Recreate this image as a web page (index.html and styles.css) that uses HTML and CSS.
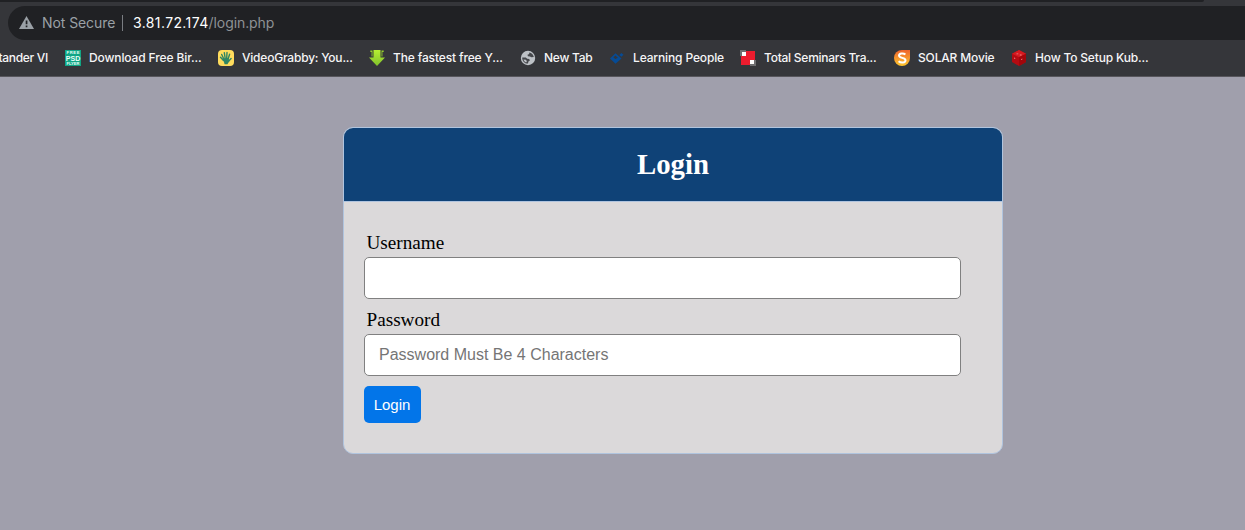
FILE: index.html
```html
<!DOCTYPE html>
<html lang="en">
<head>
<meta charset="utf-8">
<title>Login</title>
<link rel="stylesheet" href="styles.css">
</head>
<body>
<header class="browser">
  <div class="tabstrip"></div>
  <div class="address">
    <svg class="warning" width="15" height="13" viewBox="0 0 15 13"><path d="M7.5 0 15 13H0z" fill="#9aa0a6"/><path d="M6.7 4.6h1.7v3.6H6.7zM6.7 9.5h1.7v1.7H6.7z" fill="#202124"/></svg>
    <span class="insecure">Not Secure</span>
    <span class="divider"></span>
    <span class="url"><span class="host">3.81.72.174</span><span class="path">/login.php</span></span>
  </div>
  <nav class="bookmarks">
    <div class="bookmark clipped"><span>tander VI</span></div>
    <div class="bookmark">
      <svg width="16" height="16" viewBox="0 0 16 16"><rect width="16" height="16" fill="#10a585"/><g fill="#e8fff8" font-family="Liberation Sans, sans-serif" font-weight="bold" text-anchor="middle"><text x="8" y="4.2" font-size="4.2" textLength="13">FREE</text><text x="8" y="10.9" font-size="7.5" textLength="14.5" lengthAdjust="spacingAndGlyphs">PSD</text><text x="8" y="15.4" font-size="4.2" textLength="13" lengthAdjust="spacingAndGlyphs">FLYER</text></g></svg>
      <span class="download">Download Free Bir...</span>
    </div>
    <div class="bookmark">
      <svg width="16" height="16" viewBox="0 0 16 16"><rect width="16" height="16" rx="4" fill="#ffdc5d"/><g fill="none" stroke="#2f8564" stroke-width="1.4" stroke-linecap="round"><path d="M5.8 9 3.7 4.5M7.2 8.5 6.3 2.7M8.7 8.5 9 2.5M10.1 9l1.5-4.8M10.3 11.4 13.1 8.6M5.5 10.5 2.5 7.2"/></g><path d="M5 8.5 10.6 8l.5 3.3-1.6 3H6.6z" fill="#2f8564"/></svg>
      <span class="grabby">VideoGrabby: You...</span>
    </div>
    <div class="bookmark">
      <svg width="16" height="16" viewBox="0 0 16 16"><defs><linearGradient id="lime" x1="0" y1="0" x2="0" y2="1"><stop offset="0" stop-color="#b7ef32"/><stop offset="1" stop-color="#7fc02c"/></linearGradient></defs><path d="M4.5 0h7v7.5H16L8 16 0 7.5h4.5z" fill="url(#lime)"/><path d="M1.3.5H3.5V6.5H2.6V2H1.3zM14.7.5h-2.2v6h.9V2h1.3z" fill="#94ce2d"/></svg>
      <span class="fastest">The fastest free Y...</span>
    </div>
    <div class="bookmark">
      <svg width="16" height="16" viewBox="0 0 16 16"><circle cx="8" cy="8" r="7.2" fill="#bdc1c6"/><path d="M9.2 2.4c2.4.4 4.3 2.2 4.6 4.6l-2.3.3-1.6-.9-2-.1-.4-1.5 1.7-.9zM2.2 7.4h3.6l1.4 1.3 2 .2.7 1.5-1.5 1.2-.4 2c-3.4.2-5.9-2.8-5.8-6.2z" fill="#45474b"/><path d="m3.4 9.6 2.5.1 1 1.6-.8 1.2C4.8 12 3.8 11 3.4 9.6z" fill="#bdc1c6"/></svg>
      <span class="newtab">New Tab</span>
    </div>
    <div class="bookmark">
      <svg width="16" height="16" viewBox="0 0 16 16"><path d="m6.5 3.2 6 5.2-6 5.3L1 8.4z" fill="#064b95"/><path d="m6.3 5.5 2.6 2.2-2.5 1.2-2-1.3z" fill="#35363a"/><path d="m12.3 3.1 2.2 1.7-2.1 2-2.1-1.9z" fill="#064b95"/></svg>
      <span class="learning">Learning People</span>
    </div>
    <div class="bookmark">
      <svg width="16" height="16" viewBox="0 0 16 16"><path d="M0 0h6v6H0zM10 10h6v6h-6z" fill="#6e6e70"/><path d="M1 1h14v14H1z" fill="#ed1c2e"/><path d="M10 10h6v6h-6z" fill="#6e6e70"/><path d="M0 0h6v6H0z" fill="#6e6e70"/><path d="M2 2h4v4H2zM10 10h4v4h-4z" fill="#fff"/></svg>
      <span class="seminars">Total Seminars Tra...</span>
    </div>
    <div class="bookmark">
      <svg width="16" height="16" viewBox="0 0 16 16"><defs><linearGradient id="solar" x1="0" y1="0" x2="0" y2="1"><stop offset="0" stop-color="#ee642d"/><stop offset="1" stop-color="#ffc72d"/></linearGradient></defs><path d="M8 0h8v8a8 8 0 1 1-8-8z" fill="url(#solar)"/><path d="M11.4 4.5C9.5 2.8 5 3 5 5.6c0 2.9 6.5 1.7 6.5 4.6 0 2.9-4.6 3-6.9 1.1" fill="none" stroke="#fff" stroke-width="2"/></svg>
      <span class="solar">SOLAR Movie</span>
    </div>
    <div class="bookmark">
      <svg width="16" height="16" viewBox="0 0 16 16"><path d="m8 0 7 3.8v8.1L8 16l-7-4.1V3.8z" fill="#b50b12"/><path d="m8 0 7 3.8L8 7.3 1 3.8z" fill="#d41a20"/><path d="m8 7.3 7-3.5v8.1L8 16z" fill="#a2060b"/><path d="M5.5 3.4h1.8v.8H5.5zM8.8 4.6h1.8v.8H8.8zM3 7.5l1.2.6v1L3 8.4zM10 9.2l1.3-.7v.9l-1.3.7z" fill="#ef898b"/></svg>
      <span class="setup">How To Setup Kub...</span>
    </div>
  </nav>
</header>
<main class="page">
  <section class="card">
    <h1 class="title">Login</h1>
    <form class="form">
      <label class="label" for="username">Username</label>
      <input class="field" id="username" type="text">
      <label class="label" for="password">Password</label>
      <input class="field" id="password" type="password" placeholder="Password Must Be 4 Characters">
      <button class="submit" type="button">Login</button>
    </form>
  </section>
</main>
</body>
</html>
```

FILE: styles.css
```css
* { box-sizing: border-box; }
body {
  margin: 0;
  height: 530px;
  overflow: hidden;
  background: #a09fac;
  font-family: "Liberation Serif", serif;
}
.browser {
  height: 77px;
  background: #35363a;
  border-bottom: 1px solid #57565c;
  font-family: Inter, sans-serif;
  overflow: hidden;
}
.tabstrip {
  width: 1204px;
  height: 2px;
  background: #202124;
  border-bottom-right-radius: 3px;
}
.address {
  display: flex;
  align-items: center;
  height: 34px;
  margin: 4px 0 0 8px;
  padding-left: 11px;
  background: #202124;
  border-radius: 17px 0 0 17px;
  font-size: 14px;
  white-space: nowrap;
}
.warning { position: relative; top: -1px; }
.address span { line-height: 16px; }
.insecure { width: 80px; margin: -1px 0 0 8px; color: #9aa0a6; letter-spacing: -0.08px; }
.divider { width: 1px; height: 16px; background: #7a7d82; }
.url { margin: -1px 0 0 10px; color: #8e9195; }
.host { color: #fff; letter-spacing: 0.38px; }
.path { letter-spacing: -0.08px; }
.bookmarks {
  display: grid;
  grid-template-columns: 65px 153px 151px 151px 89px 131px 154px 117px 150px;
  height: 36px;
  color: #f5f5f6;
  font-size: 12px;
  font-weight: 500;
  white-space: nowrap;
}
.bookmark { display: flex; align-items: center; gap: 8px; min-width: 0; }
.bookmark svg { flex: none; }
.bookmark > span { margin-top: -1px; }
.clipped { width: 48px; justify-content: flex-end; letter-spacing: -0.3px; }
.download { letter-spacing: -0.12px; }
.grabby { letter-spacing: -0.21px; }
.fastest { letter-spacing: -0.14px; }
.newtab { letter-spacing: -0.25px; }
.learning { letter-spacing: -0.14px; }
.seminars { letter-spacing: -0.25px; }
.solar { letter-spacing: -0.16px; }
.setup { letter-spacing: -0.17px; }
.page { display: flex; justify-content: center; padding: 50px 0 0 101px; }
.card {
  width: 660px;
  height: 327px;
  border: 1px solid #b0c4de;
  border-radius: 10px;
  background: #dbd9da;
  overflow: hidden;
}
.title {
  height: 74px;
  margin: 0;
  border-bottom: 1px solid #b0c4de;
  background: #0f4277;
  color: #fff;
  font-size: 28.8px;
  line-height: 73px;
  text-align: center;
}
.form { display: flex; flex-direction: column; align-items: flex-start; padding: 29px 20px 0; }
.label { height: 26px; padding-left: 2.5px; font-size: 19.2px; line-height: 24px; }
.field {
  width: 597px;
  height: 42px;
  margin: 0 0 9px;
  padding: 0 14px;
  border: 1px solid gray;
  border-radius: 5px;
  background: #fff;
  font-family: "Liberation Sans", sans-serif;
  font-size: 16px;
}
.field::placeholder { color: #757575; }
.submit {
  width: 57px;
  height: 37px;
  margin-top: 1px;
  padding: 0 1px 0 0;
  border: 0;
  border-radius: 5px;
  background: #0275e9;
  color: #fff;
  font-family: "Liberation Sans", sans-serif;
  font-size: 15px;
}
```
